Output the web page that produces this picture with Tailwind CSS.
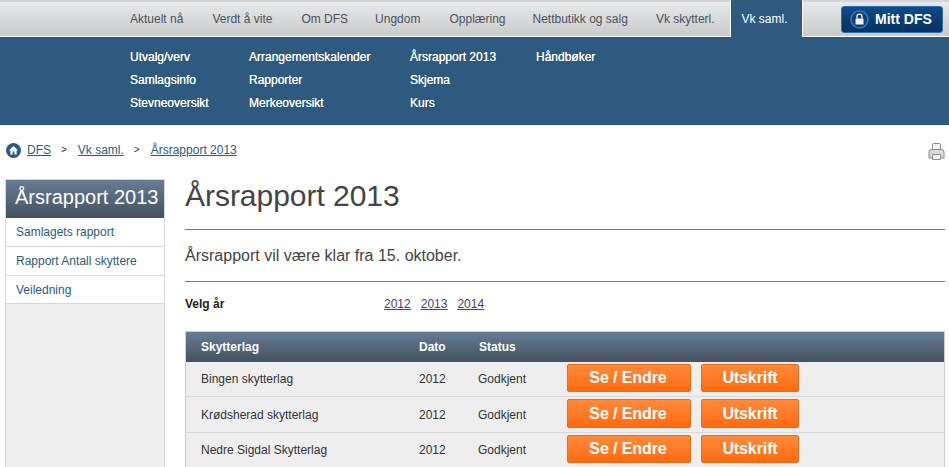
<!DOCTYPE html>
<html lang="no">

<head>
    <meta charset="UTF-8" />
    <title>Årsrapport 2013</title>
    <script src="https://cdn.jsdelivr.net/npm/@tailwindcss/browser@4"></script>
</head>

<body class="bg-white h-[467px] overflow-hidden font-['Liberation_Sans',Arial,sans-serif] text-[12px] text-[#333]">
    <!-- Toppmeny -->
    <div class="h-[37px] border-t-2 border-[#d4d4d4] bg-gradient-to-b from-[#e8e9ea] to-[#c9caca] border-b border-b-white flex whitespace-nowrap">
        <nav class="flex items-center h-full w-[730px] shrink-0 pl-[130px] gap-[29px] text-[#4a5260]">
            <a>Aktuelt nå</a>
            <a>Verdt å vite</a>
            <a>Om DFS</a>
            <a class="-ml-[2px]">Ungdom</a>
            <a>Opplæring</a>
            <a class="-ml-[2px]">Nettbutikk og salg</a>
            <a class="-ml-[1px]">Vk skytterl.</a>
        </nav>
        <div class="w-[73px] shrink-0 -mt-[2px] h-[37px] bg-[#2e5a80] border-x border-white text-white flex items-center justify-center pr-[4px]">Vk saml.</div>
        <a class="ml-[38px] mt-[4px] w-[102px] h-[27px] shrink-0 rounded-[3px] border border-[#2a6cb0] bg-gradient-to-b from-[#0f4c86] to-[#06315f] text-white font-bold text-[14px] flex items-center gap-[6px] pl-[8px]">
            <svg class="w-[19px] h-[19px] shrink-0" viewBox="0 0 19 19">
                <circle cx="9.5" cy="9.5" r="8.5" fill="#123f70" stroke="#2f7cbc" stroke-width="1.6" />
                <rect x="5.5" y="8.5" width="8" height="6" rx="0.6" fill="#f4f6f8" />
                <path d="M7 8.5V6.6a2.5 2.5 0 0 1 5 0v1.9" fill="none" stroke="#f4f6f8" stroke-width="1.3" />
            </svg>
            Mitt DFS
        </a>
    </div>

    <!-- Undermeny -->
    <div class="h-[88px] bg-[#2e5a80] text-white pl-[130px] pt-[9px] flex leading-[23px] [text-shadow:0_0_0.6px_#fff]">
        <div class="w-[119px]"><a class="block">Utvalg/verv</a><a class="block">Samlagsinfo</a><a class="block">Stevneoversikt</a></div>
        <div class="w-[161px]"><a class="block">Arrangementskalender</a><a class="block">Rapporter</a><a class="block">Merkeoversikt</a></div>
        <div class="w-[126px]"><a class="block">Årsrapport 2013</a><a class="block">Skjema</a><a class="block">Kurs</a></div>
        <div><a class="block">Håndbøker</a></div>
    </div>
    <div class="h-px bg-[#eef1f4]"></div>

    <!-- Brødsmuler -->
    <div class="h-[53px] flex items-start pl-[6px] pr-[4px] pt-[15px] text-[#2e5a80]">
        <svg class="w-[15px] h-[15px] shrink-0 mr-[6px] mt-[2px]" viewBox="0 0 15 15">
            <circle cx="7.5" cy="7.5" r="7.5" fill="#2e5a80" />
            <path d="M7.5 3 L12 7.3 H10.6 V11.5 H8.4 V8.6 H6.6 V11.5 H4.4 V7.3 H3 Z" fill="#fff" />
        </svg>
        <a class="underline">DFS</a>
        <span class="ml-[10px] mr-[11px] text-[#333] text-[10px] leading-[17px]">&gt;</span>
        <a class="underline">Vk saml.</a>
        <span class="ml-[10px] mr-[11px] text-[#333] text-[10px] leading-[17px]">&gt;</span>
        <a class="underline">Årsrapport 2013</a>
        <svg class="w-[17px] h-[17px] ml-auto mt-[2px]" viewBox="0 0 17 17" fill="#f2f2f2" stroke="#8c8c8c">
            <path d="M4.5 6.5V1.5a1 1 0 0 1 1-1h6a1 1 0 0 1 1 1v5" />
            <path d="M1 15V9a2.5 2.5 0 0 1 2.5-2.5h10A2.5 2.5 0 0 1 16 9v6z" fill="#d9d9d9" />
            <path d="M4.5 11.5h8v5h-8z" fill="#fff" />
        </svg>
    </div>

    <div class="flex pl-[5px] pr-[4px] items-stretch h-[288px]">
        <!-- Sidemeny -->
        <aside class="w-[160px] bg-[#eee] border-x border-t border-[#d8d8d8] shrink-0">
            <div class="h-[38px] bg-gradient-to-b from-[#667d95] to-[#445260] text-white text-[20px] pl-[9px] pb-[4px] flex items-center whitespace-nowrap">Årsrapport 2013</div>
            <a class="flex items-center h-[29px] bg-white border-b border-[#d8d8d8] pl-[10px] text-[#2e5a80]">Samlagets rapport</a>
            <a class="flex items-center h-[29px] bg-white border-b border-[#d8d8d8] pl-[10px] text-[#2e5a80]">Rapport Antall skyttere</a>
            <a class="flex items-center h-[28px] bg-white border-b border-[#d8d8d8] pl-[10px] text-[#2e5a80]">Veiledning</a>
        </aside>

        <!-- Hovedinnhold -->
        <main class="ml-[20px] flex-1">
            <h1 class="h-[50px] text-[30px] leading-[34px] text-[#444] tracking-[-0.03px]">Årsrapport 2013</h1>
            <p class="border-t border-b border-[#6d7d8b] h-[53px] flex items-center text-[16px] text-[#444]">Årsrapport vil være klar fra 15. oktober.</p>
            <div class="flex items-center h-[44px]">
                <b class="w-[199px] text-[#222]">Velg år</b>
                <div class="flex gap-[10px] text-[#4b3a7c] underline">
                    <a>2012</a><a>2013</a><a>2014</a>
                </div>
            </div>

            <div class="mt-[5px] border border-[#ccc] bg-[#eee]">
                <div class="h-[30px] bg-gradient-to-b from-[#667d95] to-[#445260] text-white font-bold flex items-center">
                    <span class="w-[233px] pl-[15px]">Skytterlag</span>
                    <span class="w-[60px]">Dato</span>
                    <span>Status</span>
                </div>
                <div class="h-[35px] border-b border-[#d8d8d8] flex items-center">
                    <span class="w-[233px] pl-[15px]">Bingen skytterlag</span>
                    <span class="w-[59px]">2012</span>
                    <span class="w-[89px]">Godkjent</span>
                    <a class="-mt-[2px] pr-[2px] w-[124px] h-[28px] rounded-[2px] border border-[#f06a10] bg-gradient-to-b from-[#ff8a3a] to-[#ff6a08] text-white font-bold text-[16px] tracking-[-0.1px] flex items-center justify-center">Se / Endre</a>
                    <a class="-mt-[2px] ml-[10px] w-[98px] h-[28px] rounded-[2px] border border-[#f06a10] bg-gradient-to-b from-[#ff8a3a] to-[#ff6a08] text-white font-bold text-[16px] tracking-[-0.1px] flex items-center justify-center">Utskrift</a>
                </div>
                <div class="h-[36px] border-b border-[#d8d8d8] flex items-center">
                    <span class="w-[233px] pl-[15px]">Krødsherad skytterlag</span>
                    <span class="w-[59px]">2012</span>
                    <span class="w-[89px]">Godkjent</span>
                    <a class="-mt-[2px] pr-[2px] w-[124px] h-[29px] rounded-[2px] border border-[#f06a10] bg-gradient-to-b from-[#ff8a3a] to-[#ff6a08] text-white font-bold text-[16px] tracking-[-0.1px] flex items-center justify-center">Se / Endre</a>
                    <a class="-mt-[2px] ml-[10px] w-[98px] h-[29px] rounded-[2px] border border-[#f06a10] bg-gradient-to-b from-[#ff8a3a] to-[#ff6a08] text-white font-bold text-[16px] tracking-[-0.1px] flex items-center justify-center">Utskrift</a>
                </div>
                <div class="h-[34px] flex items-center">
                    <span class="w-[233px] pl-[15px]">Nedre Sigdal Skytterlag</span>
                    <span class="w-[59px]">2012</span>
                    <span class="w-[89px]">Godkjent</span>
                    <a class="-mt-[2px] pr-[2px] w-[124px] h-[28px] rounded-[2px] border border-[#f06a10] bg-gradient-to-b from-[#ff8a3a] to-[#ff6a08] text-white font-bold text-[16px] tracking-[-0.1px] flex items-center justify-center">Se / Endre</a>
                    <a class="-mt-[2px] ml-[10px] w-[98px] h-[28px] rounded-[2px] border border-[#f06a10] bg-gradient-to-b from-[#ff8a3a] to-[#ff6a08] text-white font-bold text-[16px] tracking-[-0.1px] flex items-center justify-center">Utskrift</a>
                </div>
            </div>
        </main>
    </div>
</body>

</html>
